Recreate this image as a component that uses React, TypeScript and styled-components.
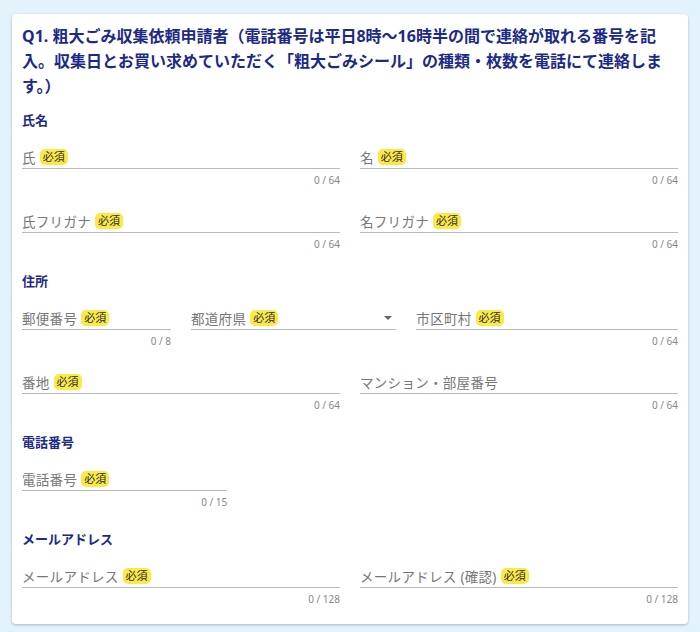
import styled, { createGlobalStyle } from "styled-components";

const GlobalStyle = createGlobalStyle`
  html, body {
    margin: 0;
    padding: 0;
    background: #e2f3fc;
  }
  body {
    font-family: "Noto Sans", "Noto Sans CJK JP", sans-serif;
  }
`;

type FieldDef = {
  label: string;
  span: number;
  required?: boolean;
  max?: number;
  select?: boolean;
};

type SectionDef = {
  title: string;
  rows: FieldDef[][];
};

// question text, split where the original form wraps it
const questionLines = [
  "Q1. 粗大ごみ収集依頼申請者（電話番号は平日8時〜16時半の間で連絡が取れる番号を記",
  "入。収集日とお買い求めていただく「粗大ごみシール」の種類・枚数を電話にて連絡しま",
  "す。）",
];

const sections: SectionDef[] = [
  {
    title: "氏名",
    rows: [
      [
        { label: "氏", span: 6, required: true, max: 64 },
        { label: "名", span: 6, required: true, max: 64 },
      ],
      [
        { label: "氏フリガナ", span: 6, required: true, max: 64 },
        { label: "名フリガナ", span: 6, required: true, max: 64 },
      ],
    ],
  },
  {
    title: "住所",
    rows: [
      [
        { label: "郵便番号", span: 3, required: true, max: 8 },
        { label: "都道府県", span: 4, required: true, select: true },
        { label: "市区町村", span: 5, required: true, max: 64 },
      ],
      [
        { label: "番地", span: 6, required: true, max: 64 },
        { label: "マンション・部屋番号", span: 6, max: 64 },
      ],
    ],
  },
  {
    title: "電話番号",
    rows: [[{ label: "電話番号", span: 4, required: true, max: 15 }]],
  },
  {
    title: "メールアドレス",
    rows: [
      [
        { label: "メールアドレス", span: 6, required: true, max: 128 },
        { label: "メールアドレス (確認)", span: 6, required: true, max: 128 },
      ],
    ],
  },
];

const App = () => {
  return (
    <Page>
      <GlobalStyle />
      <Card>
        <Question>
          {questionLines.map(line => (
            <QuestionLine key={line}>{line}</QuestionLine>
          ))}
        </Question>
        {sections.map(section => (
          <Section key={section.title}>
            <SectionTitle>{section.title}</SectionTitle>
            <Rows>
              {section.rows.map((row, i) => (
                <Row key={i}>
                  {row.map(field => (
                    <Field key={field.label} $span={field.span}>
                      <InputSlot>
                        <Label>{field.label}</Label>
                        {field.required && <Badge>必須</Badge>}
                        {field.select && <Arrow />}
                      </InputSlot>
                      <Counter>{field.max ? `0 / ${field.max}` : ""}</Counter>
                    </Field>
                  ))}
                </Row>
              ))}
            </Rows>
          </Section>
        ))}
      </Card>
    </Page>
  );
};

const Page = styled.div`
  padding: 14px 12px 10px;
`;

const Card = styled.div`
  background: #fff;
  border-radius: 4px;
  box-shadow: 0 1px 3px rgba(0, 0, 0, 0.25);
  padding: 10px 10px 19px;
`;

const Question = styled.h2`
  margin: 0 0 12px;
  font-family: "Noto Sans", "Noto Sans CJK JP", sans-serif;
  font-size: 16px;
  font-weight: 700;
  line-height: 25px;
  color: #1c2a86;
`;

const QuestionLine = styled.span`
  display: block;
  white-space: nowrap;
`;

const Section = styled.section`
  margin-bottom: 22px;

  &:last-child {
    margin-bottom: 0;
  }
`;

const SectionTitle = styled.h3`
  margin: 0 0 17px;
  font-size: 13px;
  font-weight: 700;
  line-height: 18px;
  color: #1c2a86;
`;

const Rows = styled.div`
  display: flex;
  flex-direction: column;
  gap: 24px;
`;

const Row = styled.div`
  display: grid;
  grid-template-columns: repeat(12, 1fr);
  column-gap: 20px;
`;

const Field = styled.div<{ $span: number }>`
  grid-column: span ${p => p.$span};
`;

const InputSlot = styled.div`
  position: relative;
  display: flex;
  align-items: center;
  height: 22px;
  border-bottom: 1px solid #b9b9b9;
`;

const Label = styled.span`
  font-size: 13.5px;
  color: #777;
  letter-spacing: 0.3px;
`;

const Badge = styled.span`
  margin-left: 4px;
  padding: 0 3px;
  height: 16px;
  line-height: 16px;
  border-radius: 5px;
  background: #fbe94a;
  font-size: 11px;
  color: #2a2a2a;
`;

const Arrow = styled.span`
  position: absolute;
  right: 4px;
  top: 9px;
  width: 0;
  height: 0;
  border-left: 4px solid transparent;
  border-right: 4px solid transparent;
  border-top: 4px solid #666;
`;

const Counter = styled.div`
  margin-top: 5px;
  height: 12px;
  line-height: 12px;
  text-align: right;
  font-size: 10px;
  color: #888;
`;

export default App;
